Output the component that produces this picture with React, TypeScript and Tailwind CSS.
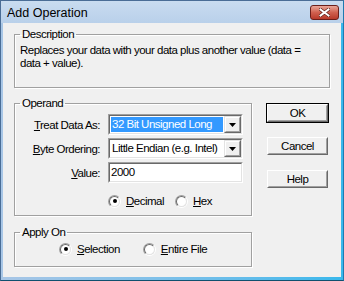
import React from "react";
import clsx from "clsx";

function Group({
  label,
  className,
  children,
}: {
  label: string;
  className?: string;
  children: React.ReactNode;
}) {
  return (
    <fieldset
      className={clsx(
        "border border-[#a0a0a0] shadow-[inset_1px_1px_0_#fff,1px_1px_0_#fff] px-[5px]",
        className
      )}
    >
      <legend className="px-[2px] leading-[14px]">{label}</legend>
      {children}
    </fieldset>
  );
}

function Arrow() {
  return (
    <svg width="7" height="4" viewBox="0 0 7 4">
      <polygon points="0,0 7,0 3.5,4" fill="#000" />
    </svg>
  );
}

function Sunken({ children, className }: { children: React.ReactNode; className?: string }) {
  return (
    <div
      className={clsx(
        "border border-t-[#a0a0a0] border-l-[#a0a0a0] border-b-white border-r-white",
        className
      )}
    >
      <div className="h-full border border-t-[#696969] border-l-[#696969] border-b-[#e3e3e3] border-r-[#e3e3e3] bg-white flex">
        {children}
      </div>
    </div>
  );
}

function Combo({ value, selected }: { value: string; selected?: boolean }) {
  return (
    <Sunken className="w-[135px] h-[21px]">
      <div className="flex-1 p-[1px] flex">
        <div
          className={clsx(
            "flex-1 flex items-center pl-[1px] leading-[13px] whitespace-nowrap",
            selected ? "bg-[#3399ff] text-white" : "text-black"
          )}
        >
          {value}
        </div>
      </div>
      <div className="w-[17px] border border-t-[#e3e3e3] border-l-[#e3e3e3] border-b-[#696969] border-r-[#696969] bg-[#f0f0f0]">
        <div className="h-full border border-t-white border-l-white border-b-[#a0a0a0] border-r-[#a0a0a0] flex items-center justify-center">
          <Arrow />
        </div>
      </div>
    </Sunken>
  );
}

function Radio({ checked, label, hot }: { checked?: boolean; label: string; hot: string }) {
  return (
    <div className="flex items-center gap-[5px] h-[14px]">
      <div className="w-[13px] h-[13px] rounded-full border border-t-[#a0a0a0] border-l-[#a0a0a0] border-b-white border-r-white">
        <div className="w-full h-full rounded-full border border-t-[#696969] border-l-[#696969] border-b-[#e3e3e3] border-r-[#e3e3e3] bg-white flex items-center justify-center">
          {checked && <div className="w-[4px] h-[4px] rounded-full bg-black" />}
        </div>
      </div>
      <span className="leading-[14px]">
        <u className="underline-offset-[1px]">{hot}</u>
        {label}
      </span>
    </div>
  );
}

function Button({ label, isDefault }: { label: string; isDefault?: boolean }) {
  return (
    <div
      className={clsx(
        "w-[63px] h-[20px]",
        isDefault ? "border border-black" : "border border-transparent"
      )}
    >
      <div className="h-full border border-t-white border-l-white border-b-[#696969] border-r-[#696969] bg-[#f0f0f0]">
        <div className="h-full border border-t-[#f0f0f0] border-l-[#f0f0f0] border-b-[#a0a0a0] border-r-[#a0a0a0] flex items-center justify-center leading-[13px]">
          {label}
        </div>
      </div>
    </div>
  );
}

function FieldLabel({ hot, rest }: { hot: string; rest: string }) {
  return (
    <span className="w-[80px] text-right leading-[14px]">
      <u className="underline-offset-[1px]">{hot}</u>
      {rest}
    </span>
  );
}

export default function App() {
  return (
    <div className="w-[344px] h-[281px] flex flex-col bg-[#c0d5ec] border border-[#4a6d96] border-r-[#1f7ab0] border-b-[#10506f] font-['Liberation_Sans',Arial,sans-serif] text-[11.5px] tracking-[-0.5px] text-black">
      <div className="h-[22px] flex items-center justify-between pl-[6px] pr-[4px] bg-gradient-to-b from-[#c9dcf0] to-[#b9d0ea] tracking-normal">
        <span className="text-[12.5px] leading-[16px] pt-[1px]">Add Operation</span>
        <div className="w-[29px] h-[15px] rounded-[3px] border border-[#6b1f1a] bg-gradient-to-b from-[#e8a598] via-[#d0604f] to-[#b8392a] flex items-center justify-center">
          <svg width="11" height="9" viewBox="0 0 11 9">
            <path d="M1.5 1.5 L9.5 7.5 M9.5 1.5 L1.5 7.5" stroke="#5a1d16" strokeWidth="3.4" strokeLinecap="square" />
            <path d="M1.5 1.5 L9.5 7.5 M9.5 1.5 L1.5 7.5" stroke="#fff" strokeWidth="2" strokeLinecap="square" />
          </svg>
        </div>
      </div>
      <div className="flex-1 flex pl-[2px] pr-[2px] pb-[3px] bg-gradient-to-r from-[#a8c6e6] to-[#38b8ec]">
        <div className="flex-1 bg-[#f0f0f0] pl-[11px] pt-[4px] flex flex-col">
          <Group label="Description" className="w-[316px] h-[61px]">
            <p className="mt-[3px] leading-[13px]">
              Replaces your data with your data plus another value (data =
              <br />
              data + value).
            </p>
          </Group>
          <div className="flex mt-[8px] gap-[14px]">
            <div className="flex flex-col">
              <Group label="Operand" className="w-[238px] h-[120px]">
                <div className="mt-[4px] flex flex-col gap-[3px]">
                  <div className="flex items-center gap-[8px]">
                    <FieldLabel hot="T" rest="reat Data As:" />
                    <Combo value="32 Bit Unsigned Long" selected />
                  </div>
                  <div className="flex items-center gap-[8px]">
                    <FieldLabel hot="B" rest="yte Ordering:" />
                    <Combo value="Little Endian (e.g. Intel)" />
                  </div>
                  <div className="flex items-center gap-[8px]">
                    <FieldLabel hot="V" rest="alue:" />
                    <Sunken className="w-[135px] h-[21px]">
                      <div className="flex items-center pl-[1px] leading-[13px]">2000</div>
                    </Sunken>
                  </div>
                </div>
                <div className="mt-[11px] pl-[88px] flex gap-[11px]">
                  <Radio checked hot="D" label="ecimal" />
                  <Radio hot="H" label="ex" />
                </div>
              </Group>
              <Group label="Apply On" className="w-[238px] h-[42px] mt-[9px]">
                <div className="mt-[3px] pl-[39px] flex gap-[23px]">
                  <Radio checked hot="S" label="election" />
                  <Radio hot="E" label="ntire File" />
                </div>
              </Group>
            </div>
            <div className="flex flex-col gap-[13px] mt-[7px]">
              <Button label="OK" isDefault />
              <Button label="Cancel" />
              <Button label="Help" />
            </div>
          </div>
        </div>
      </div>
    </div>
  );
}
